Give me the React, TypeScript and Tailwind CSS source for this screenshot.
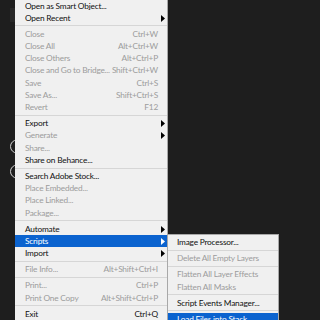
import React from "react";

type Item =
  | { sep: true }
  | { label: string; shortcut?: string; disabled?: boolean; arrow?: boolean; active?: boolean };

const fileMenu: Item[] = [
  { label: "Open as Smart Object..." },
  { label: "Open Recent", arrow: true },
  { sep: true },
  { label: "Close", shortcut: "Ctrl+W", disabled: true },
  { label: "Close All", shortcut: "Alt+Ctrl+W", disabled: true },
  { label: "Close Others", shortcut: "Alt+Ctrl+P", disabled: true },
  { label: "Close and Go to Bridge...", shortcut: "Shift+Ctrl+W", disabled: true },
  { label: "Save", shortcut: "Ctrl+S", disabled: true },
  { label: "Save As...", shortcut: "Shift+Ctrl+S", disabled: true },
  { label: "Revert", shortcut: "F12", disabled: true },
  { sep: true },
  { label: "Export", arrow: true },
  { label: "Generate", arrow: true, disabled: true },
  { label: "Share...", disabled: true },
  { label: "Share on Behance..." },
  { sep: true },
  { label: "Search Adobe Stock..." },
  { label: "Place Embedded...", disabled: true },
  { label: "Place Linked...", disabled: true },
  { label: "Package...", disabled: true },
  { sep: true },
  { label: "Automate", arrow: true },
  { label: "Scripts", arrow: true, active: true },
  { label: "Import", arrow: true },
  { sep: true },
  { label: "File Info...", shortcut: "Alt+Shift+Ctrl+I", disabled: true },
  { sep: true },
  { label: "Print...", shortcut: "Ctrl+P", disabled: true },
  { label: "Print One Copy", shortcut: "Alt+Shift+Ctrl+P", disabled: true },
  { sep: true },
  { label: "Exit", shortcut: "Ctrl+Q" },
];

const scriptsMenu: Item[] = [
  { label: "Image Processor..." },
  { sep: true },
  { label: "Delete All Empty Layers", disabled: true },
  { sep: true },
  { label: "Flatten All Layer Effects", disabled: true },
  { label: "Flatten All Masks", disabled: true },
  { sep: true },
  { label: "Script Events Manager..." },
  { sep: true },
  { label: "Load Files into Stack...", active: true },
];

function Arrow({ white }: { white?: boolean }) {
  return (
    <svg width="4" height="7" viewBox="0 0 4 7" className="absolute right-[2px] top-[3px]">
      <path d="M0 0 L4 3.5 L0 7 Z" fill={white ? "#ffffff" : "#000000"} />
    </svg>
  );
}

function MenuRows({ items, textLeft }: { items: Item[]; textLeft: string }) {
  return (
    <>
      {items.map((it, i) => {
        if ("sep" in it) {
          return (
            <div key={i} className="h-[4px] flex items-center">
              <div className="h-px w-full bg-[#d6d6d6]" />
            </div>
          );
        }
        const color = it.active ? "text-white" : it.disabled ? "text-[#9c9c9c]" : "text-[#111111]";
        return (
          <div
            key={i}
            className={`relative h-[12.2px] flex items-center justify-between pr-[9px] leading-none ${textLeft} ${color} ${it.active ? "bg-[#0b63cf]" : ""}`}
          >
            <span className="whitespace-nowrap">{it.label}</span>
            {it.shortcut && <span className="whitespace-nowrap">{it.shortcut}</span>}
            {it.arrow && <Arrow white={it.active} />}
          </div>
        );
      })}
    </>
  );
}

export default function App() {
  return (
    <div
      className="relative w-[320px] h-[320px] overflow-hidden bg-[#1e1e1e] flex text-[8.3px] tracking-[-0.2px]"
      style={{ fontFamily: 'Lato, "Open Sans", sans-serif' }}
    >
      <div className="w-[15px] shrink-0 relative">
        <div className="absolute left-[10px] top-[8px] w-[5px] h-[14px] bg-[#282828]" />
        <svg width="15" height="320" className="absolute left-0 top-0">
          <circle cx="17" cy="146.5" r="6.5" fill="none" stroke="#d0d0d0" strokeWidth="1" />
          <circle cx="17" cy="171.5" r="6.5" fill="none" stroke="#d0d0d0" strokeWidth="1" />
        </svg>
      </div>
      <div className="w-[153px] shrink-0 bg-[#f0f0f0] border-r border-[#a8a8a8] -mt-[0.4px]">
        <MenuRows items={fileMenu} textLeft="pl-[10px]" />
      </div>
      <div className="absolute left-[167px] top-[234px] w-[112px] bg-[#f0f0f0] border border-[#a8a8a8] pt-px">
        <MenuRows items={scriptsMenu} textLeft="pl-[9px]" />
      </div>
    </div>
  );
}
